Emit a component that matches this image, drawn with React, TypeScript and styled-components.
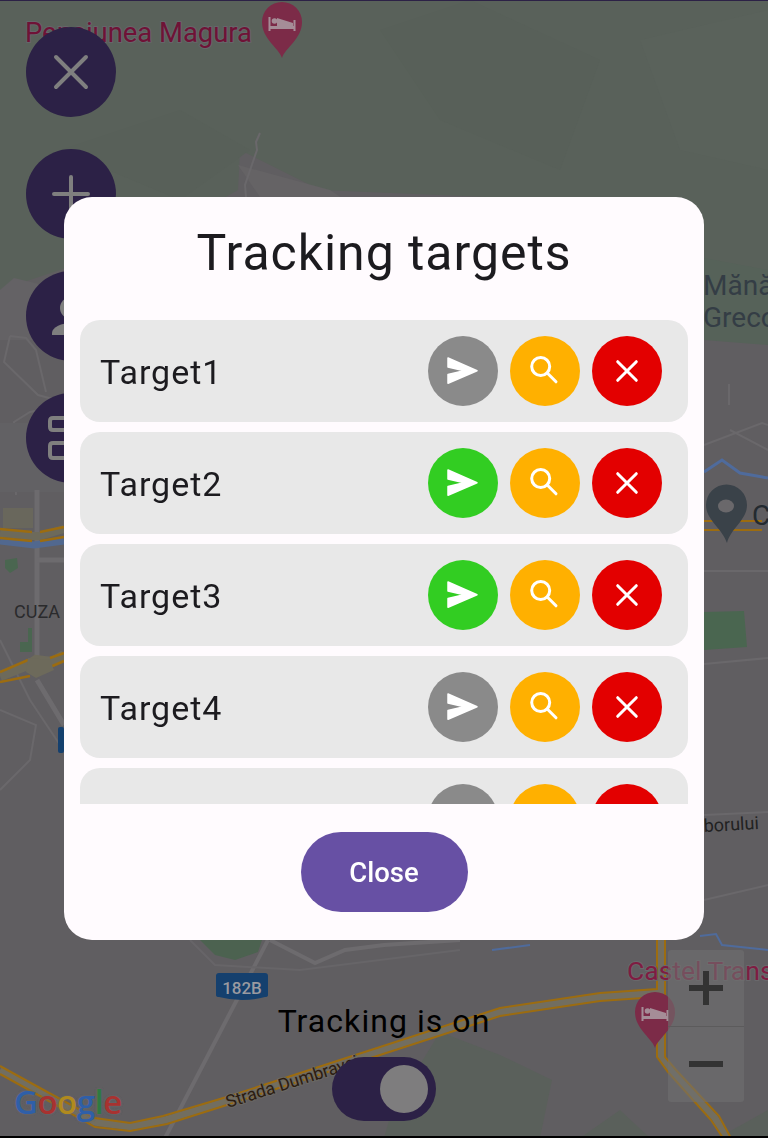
import React from 'react';
import styled, { createGlobalStyle } from 'styled-components';

const GlobalStyle = createGlobalStyle`
  html, body {
    margin: 0;
    padding: 0;
    background: #605e61;
    font-family: Roboto, "Noto Sans", sans-serif;
  }
`;

const Screen = styled.div`
  position: relative;
  width: 768px;
  height: 1138px;
  overflow: hidden;
  background: #605e61;
`;

const MapLayer = styled.svg`
  position: absolute;
  inset: 0;
  display: block;
`;

const FabColumn = styled.div`
  position: absolute;
  left: 26px;
  top: 27px;
  display: flex;
  flex-direction: column;
  gap: 32px;
`;

const Fab = styled.button`
  width: 90px;
  height: 90px;
  padding: 0;
  border: none;
  border-radius: 50%;
  background: #2c2146;
  display: flex;
  align-items: center;
  justify-content: center;
`;

const ZoomControl = styled.div`
  position: absolute;
  left: 668px;
  top: 950px;
  width: 76px;
  height: 152px;
  border-radius: 3px;
  background: rgba(112, 111, 112, 0.6);
  display: flex;
  flex-direction: column;
`;

const ZoomButton = styled.div`
  flex: 1;
  display: flex;
  align-items: center;
  justify-content: center;
  & + & {
    border-top: 1px solid #5c5b5c;
  }
`;

const TrackingSwitch = styled.div`
  position: absolute;
  left: 0;
  right: 0;
  top: 1002px;
  display: flex;
  flex-direction: column;
  align-items: center;
  gap: 17px;
`;

const SwitchLabel = styled.div`
  font-size: 32px;
  line-height: 38px;
  letter-spacing: 1.05px;
  color: #000;
`;

const SwitchTrack = styled.div`
  width: 104px;
  height: 64px;
  box-sizing: border-box;
  padding: 8px;
  border-radius: 32px;
  background: #2c2146;
  display: flex;
  justify-content: flex-end;
`;

const SwitchThumb = styled.div`
  width: 48px;
  height: 48px;
  border-radius: 50%;
  background: #7e7d7e;
`;

const GoogleLogo = styled.div`
  position: absolute;
  left: 14px;
  top: 1079px;
  font-family: "Open Sans", sans-serif;
  font-size: 33px;
  line-height: 46px;
  letter-spacing: -0.5px;
  font-weight: 600;
  text-shadow: 0 0 2px #6a686b, 0 0 2px #6a686b;
`;

const LogoLetter = styled.span<{ $color: string }>`
  color: ${(p) => p.$color};
`;

const Overlay = styled.div`
  position: absolute;
  inset: 0;
  padding-top: 197px;
  display: flex;
  justify-content: center;
  align-items: flex-start;
  will-change: transform;
`;

const Dialog = styled.div`
  width: 640px;
  height: 743px;
  box-sizing: border-box;
  border-radius: 28px;
  background: #fffbfe;
  display: flex;
  flex-direction: column;
`;

const Title = styled.h2`
  margin: 0;
  height: 123px;
  box-sizing: border-box;
  padding-top: 26px;
  text-align: center;
  font-size: 50px;
  line-height: 60px;
  font-weight: 400;
  letter-spacing: 0.95px;
  color: #1c1b1f;
`;

const TargetList = styled.div`
  height: 484px;
  margin: 0 16px;
  overflow: hidden;
  display: flex;
  flex-direction: column;
  gap: 10px;
`;

const TargetRow = styled.div`
  flex: none;
  height: 102px;
  box-sizing: border-box;
  padding: 0 26px 0 20px;
  border-radius: 20px;
  background: #e8e8e8;
  display: flex;
  align-items: center;
  gap: 12px;
`;

const TargetName = styled.span`
  flex: 1;
  padding-top: 2px;
  font-size: 34px;
  letter-spacing: 1px;
  color: #1c1b1f;
`;

const RoundButton = styled.button<{ $color: string }>`
  width: 70px;
  height: 70px;
  padding: 0;
  border: none;
  border-radius: 50%;
  background: ${(p) => p.$color};
  display: block;
  svg {
    display: block;
  }
`;

const DialogActions = styled.div`
  flex: 1;
  padding-top: 28px;
  display: flex;
  justify-content: center;
  align-items: flex-start;
`;

const CloseButton = styled.button`
  width: 167px;
  height: 80px;
  padding: 1px 0 0;
  border: none;
  border-radius: 40px;
  background: #6750a4;
  color: #fff;
  font-family: inherit;
  font-size: 27.5px;
  font-weight: 500;
`;

const SendIcon = () => (
  <svg width="70" height="70" viewBox="0 0 70 70">
    <path
      d="M20 22 L49 34.8 L20 47.3 L20 38.5 L36 34.8 L20 31 Z"
      fill="#fff"
      stroke="#fff"
      strokeWidth="1.5"
      strokeLinejoin="round"
    />
  </svg>
);

const SearchIcon = () => (
  <svg width="70" height="70" viewBox="0 0 70 70" fill="none" stroke="#fff" strokeWidth="3" strokeLinecap="round">
    <circle cx="30.7" cy="30.5" r="9" />
    <path d="M37.5 37.2 L46 45.8" />
  </svg>
);

const CrossIcon = () => (
  <svg width="70" height="70" viewBox="0 0 70 70" fill="none" stroke="#fff" strokeWidth="3" strokeLinecap="round">
    <path d="M25.7 25.7 L44.3 44.3 M44.3 25.7 L25.7 44.3" />
  </svg>
);

const FabIcon = ({ children }: { children: React.ReactNode }) => (
  <svg width="90" height="90" viewBox="0 0 90 90" fill="none" stroke="#7f7f7f" strokeWidth="4" strokeLinecap="round">
    {children}
  </svg>
);

const HotelPin = ({ x, y }: { x: number; y: number }) => (
  <g transform={`translate(${x} ${y})`}>
    <path d="M0 36 C-3 26 -20 17 -20 0 A20 20 0 1 1 20 0 C20 17 3 26 0 36 Z" fill="#7c2b48" />
    <path d="M-12.5 -5 V9 M12.5 -2 V9" stroke="#a58d97" strokeWidth="2" fill="none" />
    <path d="M-13 4 H13 V7 H-13 Z M-5 -4 L11 1 V4 H-5 Z" fill="#a58d97" />
    <circle cx="-7.5" cy="-1" r="2.8" fill="#a58d97" />
  </g>
);

const mapHalo = { paintOrder: 'stroke', stroke: '#6a686b', strokeWidth: 2 } as const;

const MapDrawing = () => (
  <MapLayer width="768" height="1138" viewBox="0 0 768 1138">
    {/* wooded hills at the top */}
    <path d="M0 0 H768 V345 L720 325 L704 340 L560 200 L320 190 L240 150 L238 190 L150 240 L60 270 L0 290 Z" fill="#59615a" />
    <path d="M380 30 L470 0 L600 60 L560 170 L440 120 Z" fill="#586059" />
    <path d="M640 40 L768 10 V170 L680 150 Z" fill="#5a625b" />
    <path d="M60 150 L180 110 L250 150 L180 200 Z" fill="#586059" />
    <path d="M0 290 L14 278 L64 290 V340 L0 340 Z" fill="#646265" />
    <path d="M238 165 L330 190 L345 200 L260 197 Z" fill="#656365" />
    <path d="M260 133 L256 142 L257 150 L245 185 L246 197" stroke="#6a686b" strokeWidth="2" fill="none" />

    {/* left block of streets */}
    <g stroke="#6a686b" strokeWidth="2" fill="none">
      <path d="M10 336 L4 362 L38 395 L64 402" />
      <path d="M10 336 L26 338 L36 350 L46 392" />
      <path d="M64 405 L30 412 L14 422 L16 495" />
      <path d="M0 710 L36 725 L30 760 L0 790" />
      <path d="M0 640 L30 700 L60 745" />
    </g>
    <path d="M0 423 H64 V492 H0 Z" fill="#626164" />
    <path d="M3 508 H33 V528 H3 Z" fill="#69675c" />
    <g stroke="#6d6b6e" strokeWidth="5" fill="none">
      <path d="M37 490 V660 M37 680 L64 725" />
      <path d="M37 560 H64" />
    </g>
    <path d="M0 541 L34 545 L64 541" stroke="#51688f" strokeWidth="7" fill="none" />
    <path d="M0 533 L32 536 L40 536 L64 529" stroke="#6d6a5b" strokeWidth="8" fill="none" />
    <path d="M0 529 L32 532 M40 532 L64 527 M0 538 L32 541 M40 541 L64 537" stroke="#9c6c10" strokeWidth="2.5" fill="none" />
    <path d="M5 560 L17 558 L18 568 L10 573 L5 568 Z" fill="#4a6650" />
    <path d="M28 628 H32 V652 H20 V642 H28 Z" fill="#4a6650" />
    <path d="M0 676 L30 664 L36 660 L52 662 L64 655" stroke="#6d6a5b" strokeWidth="10" fill="none" />
    <path d="M0 672 L28 660 M50 658 L64 653 M0 682 L30 676 M48 668 L64 661" stroke="#9c6c10" strokeWidth="2.5" fill="none" />
    <path d="M28 658 L50 660 L54 670 L36 678 L26 672 Z" fill="#6d6a5b" />
    <rect x="58" y="727" width="6" height="26" rx="2" fill="#15406e" />
    <text x="14" y="618" fontFamily="Roboto" fontSize="18" fill="#2a2a2c">CUZA</text>

    {/* right edge */}
    <path d="M704 340 L768 345 V270 L704 258 Z" fill="#566259" />
    <g stroke="#6a686b" strokeWidth="2" fill="none">
      <path d="M704 445 L762 423 L768 425 M730 430 L768 450" />
      <path d="M704 571 H768 M704 664 L768 658 M729 384 V405" />
      <path d="M704 815 L768 812 M704 900 L768 885" />
    </g>
    <path d="M704 472 L722 460 L740 473 L768 478" stroke="#4f6b9c" strokeWidth="3" fill="none" />
    <path d="M704 521 H762 M704 530 H762" stroke="#9c6c10" strokeWidth="2" fill="none" />
    <path d="M704 612 L744 611 L747 647 L704 650 Z" fill="#4a6650" />
    <path d="M727 543 C722 528 706 520 706 505 A20.5 20.5 0 1 1 747 505 C747 520 731 528 727 543 Z" fill="#3a4249" />
    <ellipse cx="726" cy="506" rx="8" ry="6.5" fill="#6a686b" />
    <text x="752" y="525" fontFamily="Roboto" fontSize="28" fill="#232a30">C</text>
    <text x="703" y="295" fontFamily="Roboto" fontSize="28" fill="#343d45">Mănă</text>
    <text x="703" y="327" fontFamily="Roboto" fontSize="28" fill="#343d45">Greco</text>
    <text x="704" y="832" fontFamily="Roboto" fontSize="18" fill="#222" transform="rotate(-3 704 832)">borului</text>

    {/* hotel label at the top */}
    <text x="25" y="42" fontFamily="Roboto" fontSize="27.4" fill="#6f1236" stroke="#65666a" strokeWidth="2" style={{ paintOrder: 'stroke' }}>Pensiunea Magura</text>
    <HotelPin x={282} y={22} />

    {/* bottom block */}
    <path d="M200 940 H262 L258 952 L235 960 L215 955 Z" fill="#4c6250" />
    <g stroke="#6d6b6e" strokeWidth="4" fill="none">
      <path d="M268 940 L165 1138" />
      <path d="M270 940 L315 963 L345 950 L384 945 L460 940" />
      <path d="M190 940 L215 965 L300 970 L460 950" strokeWidth="2" stroke="#676568" />
    </g>
    <path d="M492 950 L530 945" stroke="#4f6b9c" strokeWidth="2" fill="none" />
    <path d="M700 936 L716 934 L722 945 L768 950" stroke="#4f6b9c" strokeWidth="2" fill="none" />
    <path d="M384 1138 L392 1110 L440 1032 L500 1055 L552 1080 L540 1138 Z" fill="#5a605b" />
    <path d="M650 1138 L620 1110 L580 1138 Z" fill="#5a605b" />
    <path d="M718 1138 L768 1110 V1138 Z" fill="#5a605b" />
    <path d="M0 1070 L40 1092 L95 1122 L130 1127 L165 1120 L230 1100 L340 1064 L500 1012 L600 997 L661 993 V940 M661 993 V1057 L672 1072 L715 1118 L727 1138" stroke="#726e60" strokeWidth="7" fill="none" />
    <path d="M0 1066 L40 1088 L95 1118 L130 1123 L163 1116 L230 1096 L340 1060 L500 1008 L600 993 L657 989 V940 M665 940 V1057 L676 1070 L719 1116 L731 1138" stroke="#9c6c10" strokeWidth="2" fill="none" />
    <path d="M0 1074 L40 1096 L95 1127 L130 1131 L167 1124 L230 1104 L340 1068 L500 1016 L600 1001 L657 997 V1057 L668 1072 L711 1120 L723 1138" stroke="#9c6c10" strokeWidth="2" fill="none" />
    <text x="228" y="1108" fontFamily="Roboto" fontSize="17.5" fill="#2c1c10" stroke="#6b6861" strokeWidth="2" style={{ paintOrder: 'stroke' }} transform="rotate(-17.5 228 1108)">Strada Dumbravei</text>

    <path d="M219 973 H265 Q268 973 268 976 V995 Q268 997 265 997 Q242 1003 219 997 Q216 997 216 995 V976 Q216 973 219 973 Z" fill="#15406e" />
    <text x="242" y="994" fontFamily="Roboto" fontSize="17" fontWeight="500" fill="#9a9aa0" textAnchor="middle">182B</text>

    <text x="627" y="980" fontFamily="Roboto" fontSize="26.5" fill="#7f1c42" style={mapHalo}>Castel Trans</text>
    <HotelPin x={655} y={1012} />

    <path d="M0 1137 H768" stroke="#000" strokeWidth="2" />
    <path d="M0 0.5 H768" stroke="#2c2146" strokeWidth="1" />
  </MapLayer>
);

const targets = [
  { name: 'Target1', active: false },
  { name: 'Target2', active: true },
  { name: 'Target3', active: true },
  { name: 'Target4', active: false },
  { name: 'Target5', active: false },
];

const googleLetters: [string, string][] = [
  ['G', '#2f5fa8'],
  ['o', '#a83230'],
  ['o', '#b08a1e'],
  ['g', '#2f5fa8'],
  ['l', '#2f7a42'],
  ['e', '#a83230'],
];

const App: React.FC = () => {
  return (
    <Screen>
      <GlobalStyle />
      <MapDrawing />

      <GoogleLogo>
        {googleLetters.map(([letter, color], i) => (
          <LogoLetter key={i} $color={color}>{letter}</LogoLetter>
        ))}
      </GoogleLogo>

      <FabColumn>
        <Fab>
          <FabIcon>
            <path d="M30 30 L60 60 M60 30 L30 60" />
          </FabIcon>
        </Fab>
        <Fab>
          <FabIcon>
            <path d="M45 28 V62 M28 45 H62" />
          </FabIcon>
        </Fab>
        <Fab>
          <FabIcon>
            <circle cx="45" cy="37" r="11" fill="#7f7f7f" stroke="none" />
            <path d="M26 64 V62 C26 56 36 52 45 52 C54 52 64 56 64 62 V64 Z" fill="#7f7f7f" stroke="none" />
          </FabIcon>
        </Fab>
        <Fab>
          <FabIcon>
            <path d="M50 25 H27 Q24 25 24 28 V34 Q24 37 27 37 H50 M50 50 H27 Q24 50 24 53 V62 Q24 65 27 65 H50" />
          </FabIcon>
        </Fab>
      </FabColumn>

      <ZoomControl>
        <ZoomButton>
          <svg width="36" height="36" viewBox="0 0 36 36">
            <path d="M1 18 H35 M18 1 V35" stroke="#333" strokeWidth="6" />
          </svg>
        </ZoomButton>
        <ZoomButton>
          <svg width="36" height="36" viewBox="0 0 36 36">
            <path d="M1 18 H35" stroke="#333" strokeWidth="6" />
          </svg>
        </ZoomButton>
      </ZoomControl>

      <TrackingSwitch>
        <SwitchLabel>Tracking is on</SwitchLabel>
        <SwitchTrack>
          <SwitchThumb />
        </SwitchTrack>
      </TrackingSwitch>

      <Overlay>
        <Dialog>
          <Title>Tracking targets</Title>
          <TargetList>
            {targets.map((t) => (
              <TargetRow key={t.name}>
                <TargetName>{t.name}</TargetName>
                <RoundButton $color={t.active ? '#32cd22' : '#8a8a8a'}>
                  <SendIcon />
                </RoundButton>
                <RoundButton $color="#ffb000">
                  <SearchIcon />
                </RoundButton>
                <RoundButton $color="#e30000">
                  <CrossIcon />
                </RoundButton>
              </TargetRow>
            ))}
          </TargetList>
          <DialogActions>
            <CloseButton>Close</CloseButton>
          </DialogActions>
        </Dialog>
      </Overlay>
    </Screen>
  );
};

export default App;
